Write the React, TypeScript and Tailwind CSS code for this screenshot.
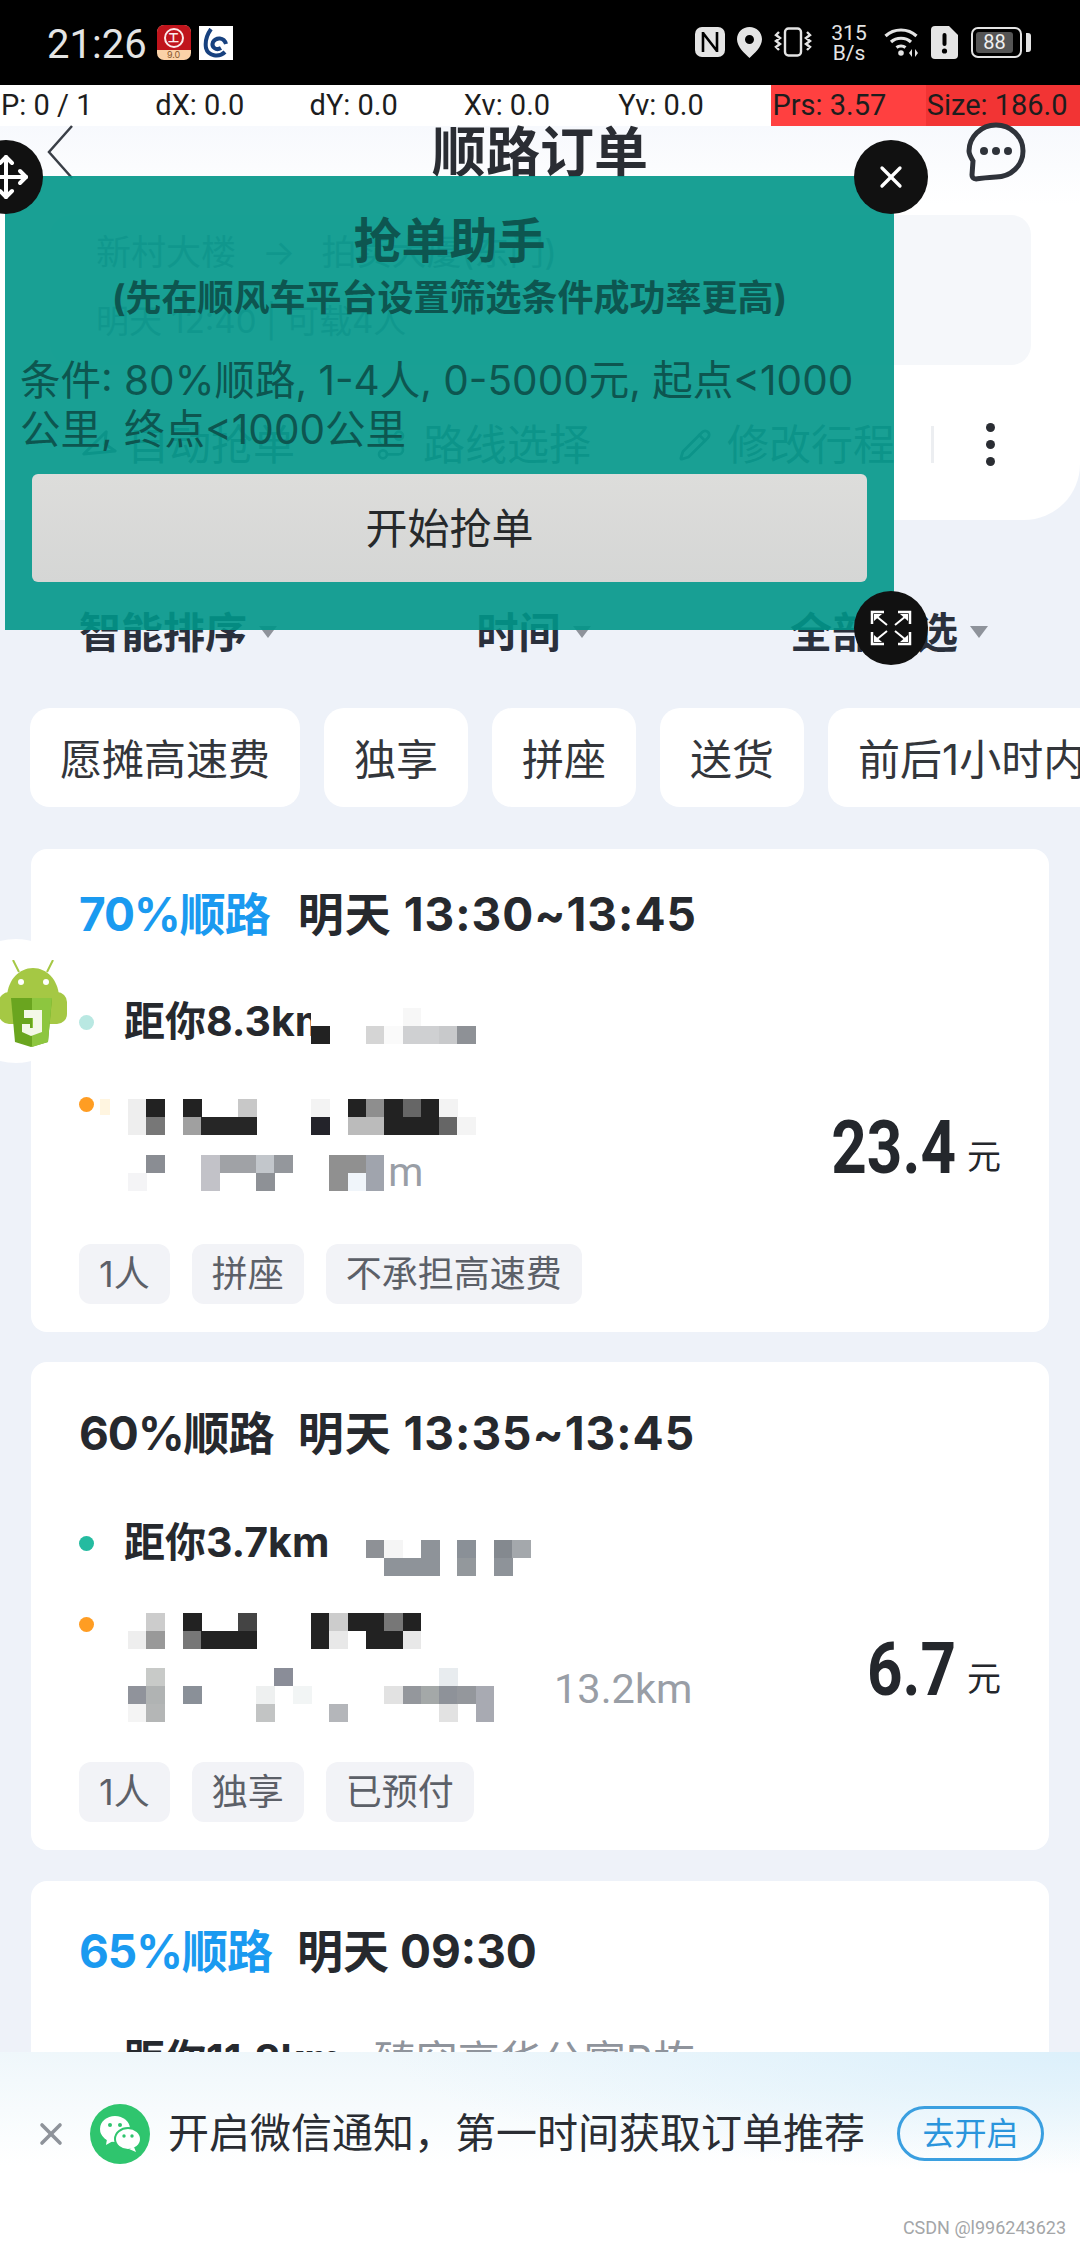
import React from 'react';
import { Move, X, Pencil, Route, Navigation } from 'lucide-react';

type Cell = [number, number, string];

const CELL_W = 18.3;
const CELL_H = 18;

const Mosaic = ({ cols, rows, cells }: { cols: number; rows: number; cells: Cell[] }) => (
    <svg width={cols * CELL_W} height={rows * CELL_H} className="shrink-0 block" shapeRendering="crispEdges">
        {cells.map(([c, r, color]) => (
            <rect key={`${c}-${r}`} x={c * CELL_W} y={r * CELL_H} width={CELL_W + 0.5} height={CELL_H} fill={color} />
        ))}
    </svg>
);

const c1Near: Cell[] = [
    [10, 0, '#ffffff'],
    [11, 0, '#ffffff'],
    [11, 1, '#ffffff'],
    [15, 0, '#f7f7f7'],
    [10, 1, '#222222'],
    [13, 1, '#d5d5d5'],
    [14, 1, '#fafafa'],
    [15, 1, '#cfd0d2'],
    [16, 1, '#cfd0d2'],
    [17, 1, '#c8c9cb'],
    [18, 1, '#8e9196'],
];
const c1LineA: Cell[] = [
    [0, 0, '#eeeeee'], [1, 0, '#222222'], [3, 0, '#222222'], [6, 0, '#c8c8c8'], [10, 0, '#f3f3f3'],
    [12, 0, '#222222'], [13, 0, '#8e8e8e'], [14, 0, '#222222'], [15, 0, '#666666'], [16, 0, '#222222'], [17, 0, '#f3f3f3'],
    [0, 1, '#eeeeee'], [1, 1, '#777777'], [3, 1, '#a0a0a0'], [4, 1, '#262626'], [5, 1, '#262626'], [6, 1, '#262626'],
    [10, 1, '#23232a'], [12, 1, '#bbbbbb'], [13, 1, '#bbbbbb'], [14, 1, '#222222'], [15, 1, '#222222'], [16, 1, '#222222'],
    [17, 1, '#666666'], [18, 1, '#f4f4f4'],
];
const c1LineB: Cell[] = [
    [1, 0, '#8a8d93'], [4, 0, '#c2c2c8'], [5, 0, '#a0a2a6'], [6, 0, '#a0a2a6'], [7, 0, '#c2c6cb'], [8, 0, '#94979c'],
    [11, 0, '#909090'], [12, 0, '#909090'], [13, 0, '#a0a4ad'],
    [0, 1, '#f4f4f6'], [4, 1, '#c2c2c8'], [7, 1, '#8e9196'], [11, 1, '#909090'], [12, 1, '#f0f5fa'], [13, 1, '#a0a4ad'],
];
const c2Near: Cell[] = [
    [13, 0, '#8e9196'], [14, 0, '#f5f5f5'], [16, 0, '#8e9399'], [18, 0, '#8a9097'], [20, 0, '#84898f'], [21, 0, '#a4a8ac'],
    [14, 1, '#8e9399'], [15, 1, '#8e9399'], [16, 1, '#8e9399'], [18, 1, '#93989c'], [20, 1, '#8e9399'],
];
const c2LineA: Cell[] = [
    [1, 0, '#cccccc'], [3, 0, '#222222'], [6, 0, '#444444'], [10, 0, '#222222'], [11, 0, '#cccccc'],
    [12, 0, '#222222'], [13, 0, '#222222'], [14, 0, '#777777'], [15, 0, '#222222'],
    [0, 1, '#eeeeee'], [1, 1, '#999999'], [3, 1, '#777777'], [4, 1, '#222222'], [5, 1, '#222222'], [6, 1, '#222222'],
    [10, 1, '#222222'], [11, 1, '#e8e8e8'], [13, 1, '#222222'], [14, 1, '#222222'], [15, 1, '#e8e8e8'],
];
const c2LineB: Cell[] = [
    [1, 0, '#c8cac8'], [8, 0, '#8a8d98'], [17, 0, '#e8ecef'],
    [0, 1, '#90939b'], [1, 1, '#b0b3b3'], [3, 1, '#8a9098'], [7, 1, '#eef0f0'], [9, 1, '#f2f5f5'], [14, 1, '#e2e2e2'],
    [15, 1, '#94979c'], [16, 1, '#a4a8a8'], [17, 1, '#8e9299'], [18, 1, '#94979c'], [19, 1, '#a8aab2'],
    [0, 2, '#f4f4f4'], [1, 2, '#b4b6b6'], [7, 2, '#c2c4c4'], [11, 2, '#b4b6ba'], [17, 2, '#e2e2e2'], [19, 2, '#a8aab2'],
];

const Tag = ({ label }: { label: string }) => (
    <span className="h-[60px] px-[20px] flex items-center rounded-xl bg-[#f2f3f7] text-[36px] text-[#5c6068]">{label}</span>
);

const Price = ({ value }: { value: string }) => (
    <div className="flex items-baseline gap-[11px] text-[#24272c]">
        <span className="inline-block scale-y-[1.2] text-[62px] leading-none font-bold font-['Roboto','Noto_Sans_CJK_SC',sans-serif]">{value}</span>
        <span className="text-[34px] leading-none">元</span>
    </div>
);

const TopCard = () => (
    <div className="bg-gradient-to-b from-[#f7f9fd] to-white to-[20%] h-[394px] rounded-br-[56px] flex flex-col">
        <div className="relative h-[54px] flex items-center justify-center shrink-0">
            <svg width="30" height="56" viewBox="0 0 30 56" className="absolute left-[45px] top-[-2px]" fill="none">
                <path d="M27 2 L4 28 L27 54" stroke="#3a3f47" strokeWidth="2.5" />
            </svg>
            <h1 className="text-[54px] leading-none font-bold text-[#2a2d33]">顺路订单</h1>
            <svg width="60" height="60" viewBox="0 0 60 60" className="absolute left-[966px] top-[-4px]" fill="none">
                <path d="M30 3a27 26 0 0 1 0 52c-5 0-12 1-20 2-3 0-4-2-4-4l1-14C4 34 3 31 3 29 3 15 15 3 30 3z" stroke="#2f333a" strokeWidth="5" />
                <circle cx="18" cy="29" r="4" fill="#2f333a" />
                <circle cx="30" cy="29" r="4" fill="#2f333a" />
                <circle cx="42" cy="29" r="4" fill="#2f333a" />
            </svg>
        </div>
        <div className="mt-[35px] ml-[50px] mr-[49px] h-[150px] shrink-0 rounded-[20px] bg-[#f5f7fa] pl-[46px] text-[#a0a7b2]">
            <div className="flex items-center h-[44px] mt-[10px] text-[35px] gap-[26px] pt-[10px]">
                <span>新村大楼</span>
                <span>→</span>
                <span>拍卖大厦(东门)</span>
            </div>
            <p className="mt-[32px] text-[33px] leading-[40px]">明天 12:40 | 可载4人</p>
        </div>
        <div className="relative flex-1 flex items-center pl-[85px] pt-[4px] text-[42px] text-[#79818e]">
            <Navigation size={36} className="mr-[6px] rotate-[200deg]" />
            <span>自动抢单</span>
            <Route size={32} className="ml-[80px] mr-[16px]" />
            <span>路线选择</span>
            <Pencil size={34} className="ml-[87px] mr-[15px]" />
            <span>修改行程</span>
            <span className="ml-[36px] h-[37px] w-[3px] bg-[#eceef1]" />
            <span className="ml-[52px] flex flex-col gap-[8px]">
                <span className="w-[9px] h-[9px] rounded-full bg-[#2a2d33]" />
                <span className="w-[9px] h-[9px] rounded-full bg-[#2a2d33]" />
                <span className="w-[9px] h-[9px] rounded-full bg-[#2a2d33]" />
            </span>
        </div>
    </div>
);

const Filter = ({ label }: { label: string }) => (
    <div className="flex items-center gap-[12px] text-[42px] leading-[50px] font-bold text-[#2a303c]">
        <span>{label}</span>
        <span className="-mt-[3px] w-0 h-0 border-x-[9px] border-x-transparent border-t-[12px] border-t-[#8e939b]" />
    </div>
);

const StatusBar = () => (
    <div className="h-[85px] bg-black flex items-start text-[#e4e4e4] relative">
        <span className="ml-[47px] mt-[21px] text-[40px] leading-[48px] font-['Roboto',sans-serif]">21:26</span>
        <div className="ml-[10px] mt-[25px] w-[34px] h-[35px] rounded-[7px] overflow-hidden flex flex-col bg-[#fbd2a8]">
            <div className="h-[25px] bg-[#c0141c] flex items-center justify-center">
                <span className="w-[20px] h-[20px] rounded-full border-2 border-[#fbeaea] text-[#fbeaea] text-[11px] leading-[16px] text-center font-bold">工</span>
            </div>
            <span className="text-[9px] leading-[10px] text-center text-[#8a5a30]">9.0</span>
        </div>
        <div className="ml-[8px] mt-[26px] w-[34px] h-[34px] bg-white flex items-center justify-center">
            <svg width="26" height="30" viewBox="0 0 26 30" fill="none">
                <path d="M8 1 C3 8 2 14 3 20 C5 28 16 30 22 24" stroke="#17417f" strokeWidth="4" />
                <path d="M23 16 C21 9 13 9 10 14 C8 19 13 23 18 20" stroke="#17417f" strokeWidth="4" />
            </svg>
        </div>
        <div className="absolute left-[695px] top-0 flex">
            <svg width="30" height="30" viewBox="0 0 30 30" className="mt-[27px]">
                <rect width="30" height="30" rx="7" fill="#e4e4e4" />
                <path d="M8 5v20M22 5v20M8 6l14 18" stroke="#000" strokeWidth="2.6" fill="none" />
            </svg>
            <svg width="25" height="31" viewBox="0 0 25 31" className="mt-[27px] ml-[12px]">
                <path fillRule="evenodd" d="M12.5 0C5.6 0 0 5.4 0 12.2 0 20 8 26.5 12.5 31 17 26.500 25 20 25 12.200 25 5.400 19.400 0 12.500 0zM12.500 8a4.500 4.500 0 1 1 0 9 4.500 4.500 0 0 1 0-9z" fill="#e4e4e4" />
            </svg>
            <svg width="38" height="30" viewBox="0 0 38 30" className="mt-[27px] ml-[12px]" fill="none" stroke="#e4e4e4" strokeWidth="2.4">
                <rect x="11" y="1.500" width="16" height="27" rx="3.500" />
                <path d="M5 5l-3 3 4 3-4 3 4 3-4 3 3 3M33 5l3 3-4 3 4 3-4 3 4 3-3 3" />
            </svg>
            <div className="mt-[23px] ml-[18px] w-[38px] flex flex-col items-center text-[21px] leading-[20px] font-['Roboto',sans-serif]">
                <span>315</span>
                <span>B/s</span>
            </div>
            <svg width="38" height="30" viewBox="0 0 38 30" className="mt-[27px] ml-[16px]" fill="none" stroke="#e4e4e4" strokeWidth="3.200">
                <path d="M1.500 9C10 1 24 1 32.500 9M7 15c5.500-5 14.500-5 20 0M12.500 20.500c2.500-2 6.500-2 9 0" />
                <circle cx="17" cy="26" r="2.800" fill="#e4e4e4" stroke="none" />
                <path d="M28 22l-3 4 3 4zM31 22l3 4-3 4z" fill="#e4e4e4" stroke="none" />
            </svg>
            <svg width="27" height="33" viewBox="0 0 27 33" className="mt-[26px] ml-[9px]">
                <path d="M4 0h14l9 9v20a4 4 0 0 1-4 4H4a4 4 0 0 1-4-4V4a4 4 0 0 1 4-4z" fill="#e4e4e4" />
                <rect x="11.500" y="7" width="4" height="13" rx="2" fill="#000" />
                <circle cx="13.500" cy="25" r="2.600" fill="#000" />
            </svg>
            <div className="mt-[27px] ml-[13px] w-[51px] h-[31px] rounded-[7px] border-2 border-[#e4e4e4] p-[3px]">
                <div className="h-full w-[37px] rounded-[3px] bg-[#555555] text-[#f0f0f0] text-[20px] leading-[21px] text-center font-['Roboto',sans-serif]">88</div>
            </div>
            <span className="mt-[33px] ml-[4px] w-[5px] h-[19px] rounded-r-[3px] bg-[#e4e4e4]" />
        </div>
    </div>
);

const debugCols = ['P: 0 / 1', 'dX: 0.0', 'dY: 0.0', 'Xv: 0.0', 'Yv: 0.0'];

const DebugBar = () => (
    <div className="h-[41px] grid grid-cols-7 bg-white text-[29px] leading-[41px] text-[#1d1d1d] font-['Roboto',sans-serif] whitespace-nowrap">
        {debugCols.map((t) => (
            <span key={t} className="pl-[1px]">{t}</span>
        ))}
        <span className="pl-[1px] bg-[#ff4040]">Prs: 3.57</span>
        <span className="pl-[1px] bg-[#f23434] overflow-hidden">Size: 186.0</span>
    </div>
);

const RouteRow = ({ dot, children }: { dot: string; children: React.ReactNode }) => (
    <div className="relative h-[50px] flex items-center text-[41px] font-bold text-[#26292e]">
        <span className={`w-[15px] h-[15px] rounded-full mr-[30px] ${dot}`} />
        {children}
    </div>
);

const CircleBtn = ({ className, children }: { className: string; children: React.ReactNode }) => (
    <div className={`absolute w-[74px] h-[74px] rounded-full bg-[#111111] text-white flex items-center justify-center ${className}`}>{children}</div>
);

const AssistantPanel = () => (
    <div className="absolute left-[5px] top-[176px] w-[889px] h-[454px] bg-[#009688]/90 flex flex-col text-[#0d5650]">
        <h2 className="mt-[35px] h-[60px] text-center text-[48px] leading-[60px] font-bold">抢单助手</h2>
        <p className="mt-[5px] h-[44px] text-center text-[36px] leading-[44px] font-bold">(先在顺风车平台设置筛选条件成功率更高)</p>
        <p className="mt-[36px] px-[15px] text-[40.5px] leading-[49px] whitespace-nowrap">
            条件: 80%顺路, 1-4人, 0-5000元, 起点&lt;1000
            <br />
            公里, 终点&lt;1000公里
        </p>
        <button className="mt-[20px] mx-[27px] h-[108px] rounded-[6px] bg-gradient-to-b from-[#dddddb] to-[#d5d6d5] text-[42px] text-[#26292b]">开始抢单</button>
    </div>
);

const FloatIcon = () => (
    <div className="absolute left-[-46px] top-[939px] w-[124px] h-[124px] rounded-full bg-white/95 flex items-center justify-center">
        <svg width="70" height="90" viewBox="0 0 70 90" className="ml-[36px] mt-[8px]">
            <path d="M14 0l6 12M54 0l-6 12" stroke="#a5c844" strokeWidth="2" />
            <path d="M8 36C9 20 20 8 34 8s25 12 26 28z" fill="#a5c844" />
            <rect x="0" y="32" width="68" height="32" rx="10" fill="#a5c844" />
            <circle cx="22" cy="22" r="3" fill="#fff" />
            <circle cx="47" cy="22" r="3" fill="#fff" />
            <path d="M12 38h41l-4 44-17 5-16-5z" fill="#6aa51f" />
            <path d="M33 38h20l-4 44-16 5z" fill="#8dc63f" />
            <path d="M25 50h18v22l-11 4-9-4v-8h8v4h3V58H25z" fill="#f4f8e8" />
        </svg>
    </div>
);

export default function App() {
    return (
        <div className="relative w-[1080px] h-[2244px] overflow-hidden bg-[#eef2f9] font-['Inter','Noto_Sans_CJK_SC',sans-serif]">
            <StatusBar />
            <DebugBar />
            <TopCard />

            <div className="mt-[88px] flex justify-between pl-[79px] pr-[92px]">
                <Filter label="智能排序" />
                <Filter label="时间" />
                <Filter label="全部筛选" />
            </div>

            <div className="mt-[50px] pl-[30px] flex gap-[24px] whitespace-nowrap">
                {['愿摊高速费', '独享', '拼座', '送货', '前后1小时内走'].map((chip) => (
                    <span key={chip} className="shrink-0 h-[99px] px-[30px] pt-[3px] flex items-center rounded-[20px] bg-white text-[42px] text-[#33363b]">{chip}</span>
                ))}
            </div>

            <div className="mt-[42px] mx-[31px] flex flex-col">
                {/* card 1 */}
                <div className="relative bg-white rounded-2xl h-[483px] px-[48px] pt-[35px]">
                    <div className="h-[60px] flex items-center gap-[28px] text-[46px] font-bold text-[#26292e]">
                        <span className="text-[#1a9af0] tracking-[-1px]">70%顺路</span>
                        <span className="tracking-[1px]">明天 13:30~13:45</span>
                    </div>
                    <div className="mt-[53px]">
                        <RouteRow dot="bg-[#b9e8e2]">距你8.3km</RouteRow>
                    </div>
                    <div className="absolute left-[97px] top-[159px]">
                        <Mosaic cols={19} rows={2} cells={c1Near} />
                    </div>
                    <div className="mt-[52px] flex items-center justify-between">
                        <div className="relative pl-[49px] flex flex-col gap-[18px]">
                            <span className="absolute left-0 top-[-2px] w-[15px] h-[15px] rounded-full bg-[#ff9d23]" />
                            <span className="absolute left-[21px] top-[0px] w-[10px] h-[16px] bg-[#fff5e0]" />
                            <Mosaic cols={19} rows={2} cells={c1LineA} />
                            <div className="flex items-center gap-[4px]">
                                <Mosaic cols={14} rows={2} cells={c1LineB} />
                                <span className="text-[40px] leading-none text-[#999ea6] font-['Roboto',sans-serif]">m</span>
                            </div>
                        </div>
                        <div className="pb-[2px] pt-[6px]"><Price value="23.4" /></div>
                    </div>
                    <div className="mt-[51px] flex gap-[22px]">
                        <Tag label="1人" />
                        <Tag label="拼座" />
                        <Tag label="不承担高速费" />
                    </div>
                </div>

                {/* card 2 */}
                <div className="relative mt-[30px] bg-white rounded-2xl h-[488px] px-[48px] pt-[41px]">
                    <div className="h-[60px] flex items-center gap-[24px] text-[46px] font-bold text-[#26292e]">
                        <span className="tracking-[-1px]">60%顺路</span>
                        <span className="tracking-[1px]">明天 13:35~13:45</span>
                    </div>
                    <div className="mt-[55px]">
                        <RouteRow dot="bg-[#24bba0]">距你3.7km</RouteRow>
                    </div>
                    <div className="absolute left-[97px] top-[178px]">
                        <Mosaic cols={22} rows={2} cells={c2Near} />
                    </div>
                    <div className="mt-[45px] flex items-center justify-between">
                        <div className="relative pl-[49px] flex flex-col gap-[19px]">
                            <span className="absolute left-0 top-[4px] w-[15px] h-[15px] rounded-full bg-[#ff9d23]" />
                            <Mosaic cols={16} rows={2} cells={c2LineA} />
                            <div className="flex items-start gap-[60px]">
                                <Mosaic cols={20} rows={3} cells={c2LineB} />
                                <span className="text-[41.5px] leading-[42px] text-[#999ea6] font-['Roboto',sans-serif]">13.2km</span>
                            </div>
                        </div>
                        <div className="pt-[4px]"><Price value="6.7" /></div>
                    </div>
                    <div className="mt-[40px] flex gap-[22px]">
                        <Tag label="1人" />
                        <Tag label="独享" />
                        <Tag label="已预付" />
                    </div>
                </div>

                {/* card 3 */}
                <div className="mt-[31px] bg-white rounded-2xl h-[480px] px-[48px] pt-[40px]">
                    <div className="h-[60px] flex items-center gap-[25px] text-[46px] font-bold text-[#26292e]">
                        <span className="text-[#1a9af0] tracking-[-1px]">65%顺路</span>
                        <span>明天 09:30</span>
                    </div>
                    <div className="mt-[54px]">
                        <RouteRow dot="bg-[#24bba0]">
                            距你11.8km
                            <span className="ml-[32px] text-[42px] font-normal text-[#8f949c]">臻容高华公寓B栋</span>
                        </RouteRow>
                    </div>
                </div>
            </div>

            <AssistantPanel />
            <CircleBtn className="left-[-31px] top-[140px]">
                <Move size={48} strokeWidth={2} />
            </CircleBtn>
            <CircleBtn className="left-[854px] top-[140px]">
                <X size={36} strokeWidth={2.2} />
            </CircleBtn>
            <CircleBtn className="left-[854px] top-[591px]">
                <svg width="42" height="36" viewBox="0 0 42 36" fill="none" stroke="#fff" strokeWidth="2.500">
                    <path d="M2 14V2h12M28 2h12v12M40 22v12H28M14 34H2V22" />
                    <path d="M6 6l11 9M36 6l-11 9M6 30l11-9M36 30l-11-9" strokeWidth="2" />
                    <path d="M4 4h8L4 11zM38 4h-8l8 7zM4 32h8l-8-7zM38 32h-8l8-7z" fill="#fff" stroke="none" />
                </svg>
            </CircleBtn>
            <FloatIcon />

            <div className="absolute left-0 right-0 top-[2052px] h-[192px] bg-[radial-gradient(ellipse_at_top_right,#dcf0fb,transparent_45%),linear-gradient(to_bottom,#eff7fb,#ffffff_60%)]">
                <div className="mt-[51px] flex items-center pl-[38px] text-[41px] text-[#2a2d33]">
                    <X size={36} strokeWidth={2.4} className="text-[#8e939a] -ml-[5px] shrink-0" />
                    <div className="ml-[21px] w-[60px] h-[60px] rounded-full bg-[#2fc56e] flex items-center justify-center shrink-0">
                        <svg width="44" height="40" viewBox="0 0 44 40">
                            <ellipse cx="17" cy="15" rx="15" ry="13" fill="#fff" />
                            <path d="M9 25l-1 6 7-4z" fill="#fff" />
                            <ellipse cx="30" cy="25" rx="13" ry="11" fill="#fff" stroke="#2fc56e" strokeWidth="2" />
                            <path d="M36 33l2 5-7-3z" fill="#fff" />
                            <circle cx="12" cy="11" r="2" fill="#2fc56e" />
                            <circle cx="22" cy="11" r="2" fill="#2fc56e" />
                            <circle cx="26" cy="22" r="1.700" fill="#2fc56e" />
                            <circle cx="34" cy="22" r="1.700" fill="#2fc56e" />
                        </svg>
                    </div>
                    <span className="ml-[18px] w-[695px] shrink-0 whitespace-nowrap">开启微信通知，第一时间获取订单推荐</span>
                    <span className="ml-[34px] w-[147px] h-[55px] shrink-0 rounded-full border-[3px] border-[#3a9fe0] flex items-center justify-center text-[32px] text-[#2a95dc]">去开启</span>
                </div>
            </div>
            <span className="absolute right-[14px] bottom-[5px] text-[18px] leading-[22px] text-[#a4a6a8] font-['Roboto',sans-serif]">CSDN @l996243623</span>
        </div>
    );
}
